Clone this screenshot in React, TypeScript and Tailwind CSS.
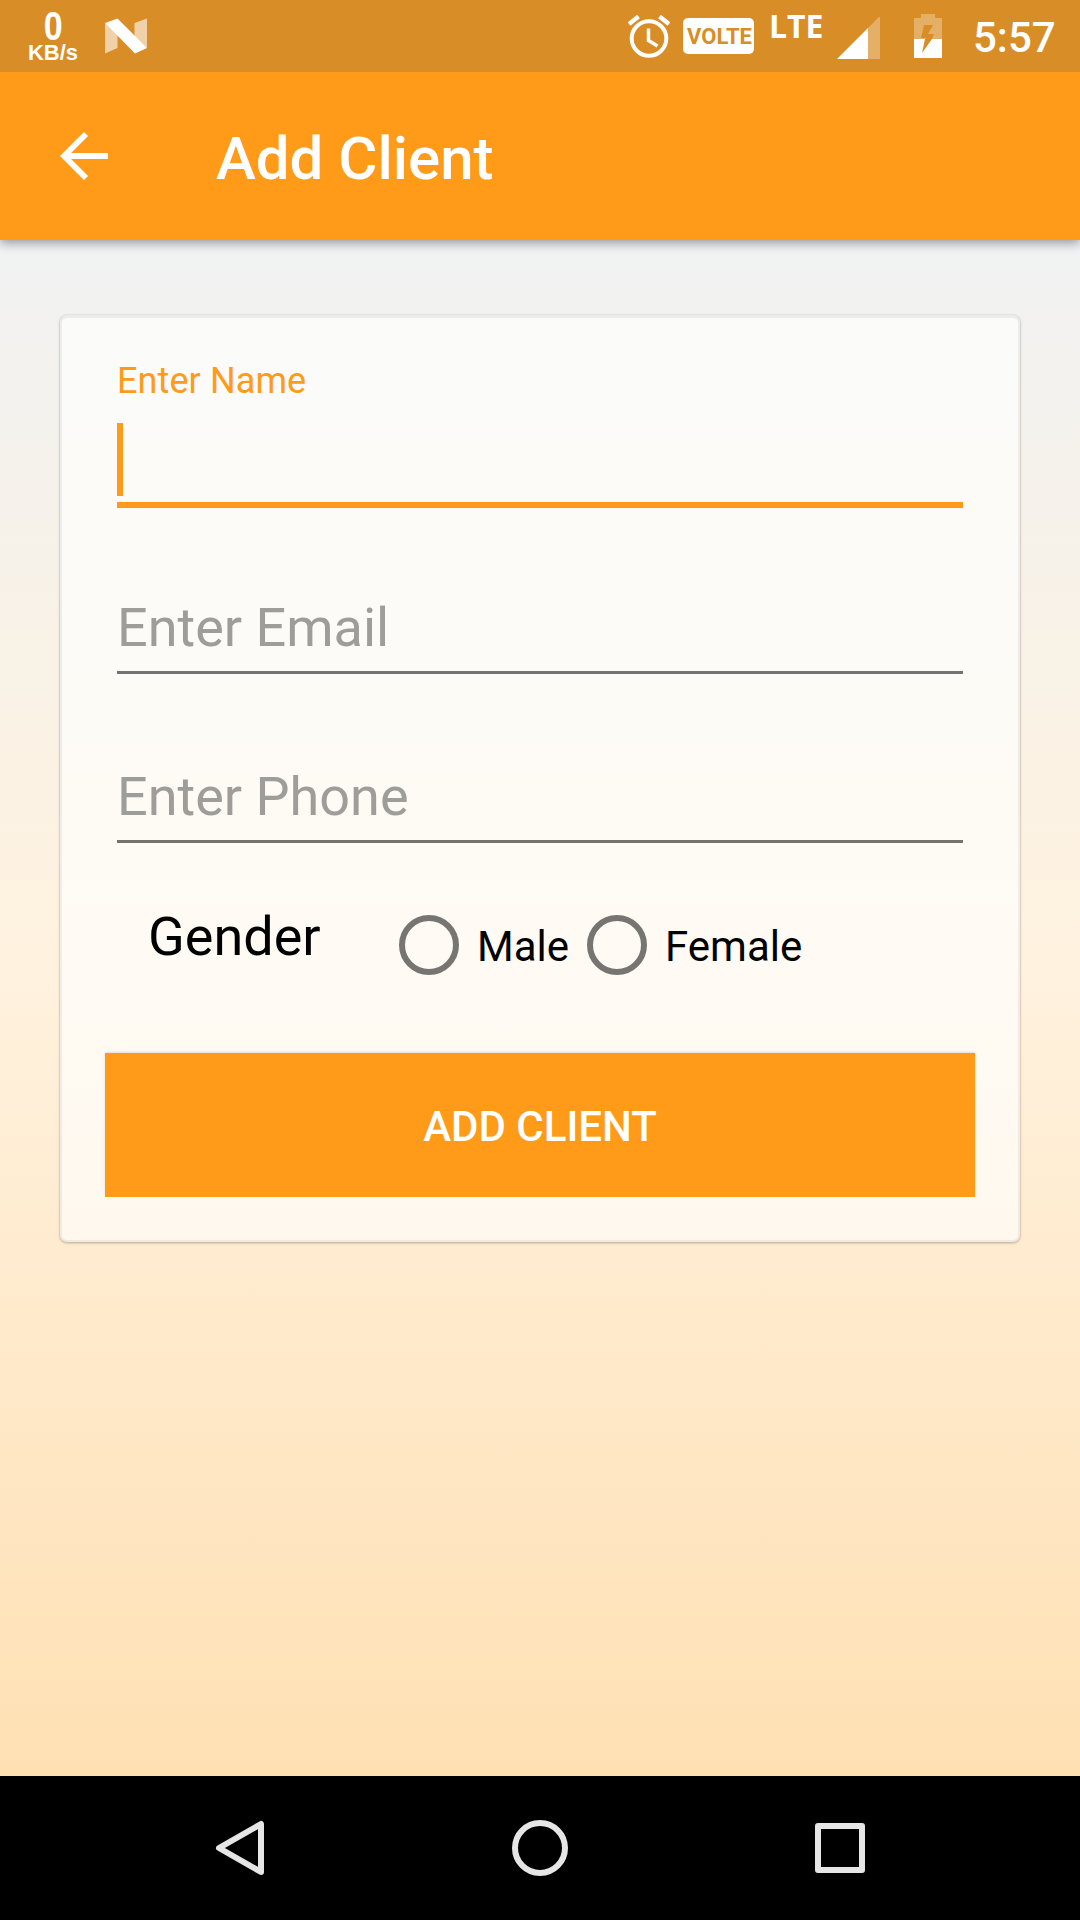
import React from "react";

function StatusBar() {
  return (
    <header className="relative z-20 flex h-[72px] w-full items-start bg-[#d98d26] text-white">
      <div className="ml-[26px] mt-[7px] flex w-[54px] flex-col items-center font-['Liberation_Sans'] font-bold">
        <span className="h-[35px] scale-x-[0.85] text-[40px] leading-[39px]">0</span>
        <span className="text-[22px] leading-[22px]">KB/s</span>
      </div>
      <svg className="ml-[25px] mt-[18px]" width="42" height="36" viewBox="0 0 42 36">
        <path d="M0 5L12.500 14V30L0 35.500Z" fill="#fff" fillOpacity=".6" />
        <path d="M29.500 5L42 .5V30L29.500 19Z" fill="#fff" fillOpacity=".6" />
        <path d="M0 5L12.500 .5L42 30L30 35.500Z" fill="#fff" />
      </svg>
      <div className="flex-1" />
      <svg className="mt-[15px]" width="42" height="43" viewBox="0 0 42 43" fill="none" stroke="#fff">
        <circle cx="21" cy="23.500" r="17.300" strokeWidth="4" />
        <path d="M20.500 13.500V25.500L29.500 31" strokeWidth="3.500" />
        <path d="M1 9L10.500 1.500M31.500 1.500L41 9" strokeWidth="4.500" />
      </svg>
      <div className="ml-[13px] mt-[18px] flex h-9 w-[71px] items-center justify-center rounded-[5px] bg-white pl-[2px] pt-[2px] font-['Roboto'] text-[22px] font-bold leading-none text-[#d98d26]">
        VOLTE
      </div>
      <span className="ml-[15px] mt-[9px] w-[56px] font-['Open_Sans'] text-[32px] font-bold leading-[34px]">LTE</span>
      <svg className="ml-[12px] mt-[17px]" width="43" height="42" viewBox="0 0 43 42">
        <path d="M0 42L31 11V42Z" fill="#fff" />
        <path d="M31 11L43 -1V42H31Z" fill="#fff" fillOpacity=".3" />
      </svg>
      <svg className="ml-[34px] mt-[14px]" width="28" height="44" viewBox="0 0 28 44">
        <path d="M7 0H21V4H28V25H18L20 20H14L19 11H10L7 24H12V25H0V4H7Z" fill="#fff" fillOpacity=".3" />
        <path d="M0 25H11L8 39L18 25H28V44H0Z" fill="#fff" />
      </svg>
      <span className="ml-[31px] mr-[25px] mt-[13px] w-[82px] whitespace-nowrap font-['Roboto'] text-[42px] font-medium leading-[50px]">5:57</span>
    </header>
  );
}

function Field({ label }: { label: string }) {
  return (
    <div className="h-[169px] border-b-[3px] border-[#757370] pt-[93px] text-[54px] leading-[60px] text-[#9e9d99]">
      {label}
    </div>
  );
}

function Radio({ label }: { label: string }) {
  return (
    <label className="flex items-center">
      <span className="size-[60px] rounded-full border-[6px] border-[#767571]" />
      <span className="ml-[18px] mt-[3px] text-[42px] leading-[50px]">{label}</span>
    </label>
  );
}

export default function App() {
  return (
    <div className="flex h-[1920px] w-[1080px] flex-col overflow-hidden bg-[#f2f2f2] font-['Roboto',sans-serif]">
      <StatusBar />
      <div className="relative z-10 flex h-[168px] items-start bg-[#ff9b18] text-white shadow-[0_3px_10px_rgba(0,0,20,0.38)]">
        <svg className="ml-[60px] mt-[60px]" width="48" height="48" viewBox="0 0 48 48" fill="none" stroke="#fff">
          <path d="M48 24H6M26 2L4 24L26 46" strokeWidth="5.800" />
        </svg>
        <h1 className="ml-[108px] mt-[52px] text-[60px] font-medium leading-[70px]">Add Client</h1>
      </div>
      <main className="flex-1 bg-[linear-gradient(to_bottom,#f1f2f3_0%,#f5f2ec_14%,#fff2df_47%,#ffe0b3_100%)] px-[60px] pt-[75px]">
        <section className="h-[927px] rounded-[7px] border-x-2 border-b-2 border-t-[3px] border-black/[0.06] bg-white/65 px-[43px] shadow-[0_0_1px_rgba(0,0,0,0.2),0_1px_3px_rgba(0,0,0,0.28)]">
          <div className="mx-[12px]">
            <div className="flex h-[190px] flex-col border-b-[6px] border-[#ff9b18] pt-[42px]">
              <span className="text-[36px] leading-[42px] tracking-[0.1px] text-[#ff9b18]">Enter Name</span>
              <span className="mt-[21px] h-[73px] w-[6px] bg-[#ff9b18]" />
            </div>
            <div className="-mt-[3px]"><Field label="Enter Email" /></div>
            <Field label="Enter Phone" />
          </div>
          <div className="flex h-[210px] items-start pl-[43px] text-black">
            <span className="mt-[64px] w-[251px] text-[54px] leading-[60px]">Gender</span>
            <div className="mt-[72px] flex gap-[18px]">
              <Radio label="Male" />
              <Radio label="Female" />
            </div>
          </div>
          <button className="flex h-[144px] w-full items-center justify-center bg-[#ff9b18] pt-[2px] text-[42px] font-medium text-white shadow-[0_-1px_2px_rgba(0,0,0,0.12)]">
            ADD CLIENT
          </button>
        </section>
      </main>
      <nav className="flex h-[144px] items-center bg-black pl-[214px]">
        <svg width="52" height="60" viewBox="0 0 52 60" fill="none" stroke="#e6e6e6" strokeWidth="6" strokeLinejoin="round">
          <path d="M47 6V54L5 30Z" />
        </svg>
        <svg className="ml-[246px]" width="56" height="56" viewBox="0 0 56 56" fill="none" stroke="#e6e6e6" strokeWidth="6">
          <circle cx="28" cy="28" r="25" />
        </svg>
        <svg className="ml-[247px]" width="50" height="50" viewBox="0 0 50 50" fill="none" stroke="#e6e6e6" strokeWidth="6" strokeLinejoin="round">
          <path d="M3 3H47V47H3Z" />
        </svg>
      </nav>
    </div>
  );
}
